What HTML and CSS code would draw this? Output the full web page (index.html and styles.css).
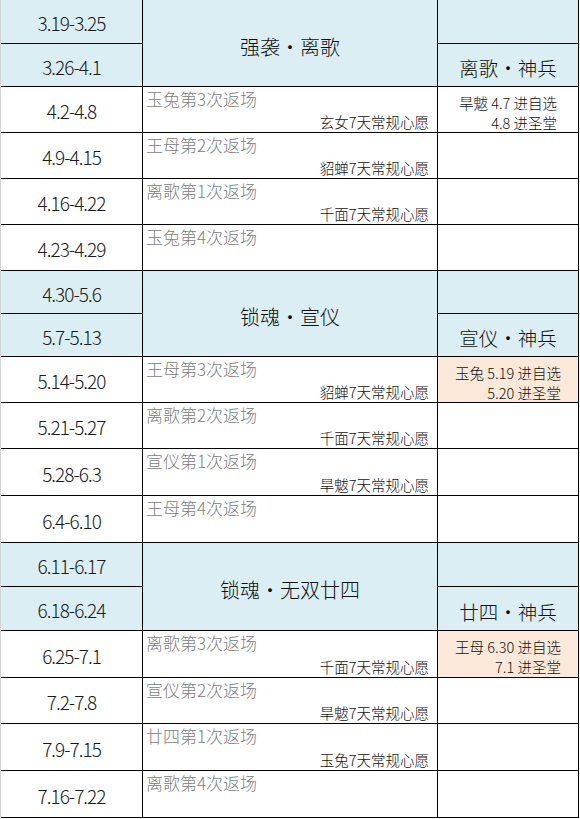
FILE: index.html
```html
<!DOCTYPE html>
<html lang="zh-CN">
<head>
<meta charset="utf-8">
<title>Schedule</title>
<link rel="stylesheet" href="styles.css">
</head>
<body>
<div class="sheet">
  <!-- group 1 -->
  <div class="c date blue r44">3.19-3.25</div>
  <div class="c head blue span2">强袭・离歌</div>
  <div class="c blue r44"></div>
  <div class="c date blue r43">3.26-4.1</div>
  <div class="c sub blue r43">离歌・神兵</div>

  <div class="c date r46">4.2-4.8</div>
  <div class="c mid"><span class="top">玉兔第3次返场</span><span class="bot">玄女7天常规心愿</span></div>
  <div class="c note"><div class="lines"><div>旱魃 4.7 进自选</div><div>4.8 进圣堂</div></div></div>

  <div class="c date r46">4.9-4.15</div>
  <div class="c mid"><span class="top">王母第2次返场</span><span class="bot">貂蝉7天常规心愿</span></div>
  <div class="c"></div>

  <div class="c date r46">4.16-4.22</div>
  <div class="c mid"><span class="top">离歌第1次返场</span><span class="bot">千面7天常规心愿</span></div>
  <div class="c"></div>

  <div class="c date r46">4.23-4.29</div>
  <div class="c mid"><span class="top">玉兔第4次返场</span><span class="bot"></span></div>
  <div class="c"></div>

  <!-- group 2 -->
  <div class="c date blue r43">4.30-5.6</div>
  <div class="c head blue span2">锁魂・宣仪</div>
  <div class="c blue r43"></div>
  <div class="c date blue r43">5.7-5.13</div>
  <div class="c sub blue r43">宣仪・神兵</div>

  <div class="c date r46">5.14-5.20</div>
  <div class="c mid"><span class="top">王母第3次返场</span><span class="bot">貂蝉7天常规心愿</span></div>
  <div class="c note peach"><div class="lines"><div>玉兔 5.19 进自选</div><div>5.20 进圣堂</div></div></div>

  <div class="c date r46">5.21-5.27</div>
  <div class="c mid"><span class="top">离歌第2次返场</span><span class="bot">千面7天常规心愿</span></div>
  <div class="c"></div>

  <div class="c date r47">5.28-6.3</div>
  <div class="c mid"><span class="top">宣仪第1次返场</span><span class="bot">旱魃7天常规心愿</span></div>
  <div class="c"></div>

  <div class="c date r47">6.4-6.10</div>
  <div class="c mid"><span class="top">王母第4次返场</span><span class="bot"></span></div>
  <div class="c"></div>

  <!-- group 3 -->
  <div class="c date blue r44">6.11-6.17</div>
  <div class="c head blue span2">锁魂・无双廿四</div>
  <div class="c blue r44"></div>
  <div class="c date blue r44">6.18-6.24</div>
  <div class="c sub blue r44">廿四・神兵</div>

  <div class="c date r47">6.25-7.1</div>
  <div class="c mid"><span class="top">离歌第3次返场</span><span class="bot">千面7天常规心愿</span></div>
  <div class="c note peach"><div class="lines"><div>王母 6.30 进自选</div><div>7.1 进圣堂</div></div></div>

  <div class="c date r46">7.2-7.8</div>
  <div class="c mid"><span class="top">宣仪第2次返场</span><span class="bot">旱魃7天常规心愿</span></div>
  <div class="c"></div>

  <div class="c date r47">7.9-7.15</div>
  <div class="c mid"><span class="top">廿四第1次返场</span><span class="bot">玉兔7天常规心愿</span></div>
  <div class="c"></div>

  <div class="c date r47">7.16-7.22</div>
  <div class="c mid"><span class="top">离歌第4次返场</span><span class="bot"></span></div>
  <div class="c"></div>
</div>
</body>
</html>
```

FILE: styles.css
```css
html, body {
  margin: 0;
  padding: 0;
  background: #ffffff;
}

.sheet {
  display: grid;
  grid-template-columns: 142px 295px 141px;
  grid-template-rows: 44px 43px 46px 46px 46px 46px 43px 43px 46px 46px 47px 47px 44px 44px 47px 46px 47px 47px;
  width: 579px;
  border-left: 1px solid #d4d4d4;
  box-sizing: border-box;
  font-family: "Noto Sans CJK SC", sans-serif;
  font-weight: 300;
  color: #111111;
}

.c {
  box-sizing: border-box;
  border-right: 1px solid #000000;
  border-bottom: 1px solid #000000;
  background: #ffffff;
  min-width: 0;
  overflow: hidden;
}

.blue {
  background: #daeef3;
}

.peach {
  background: #fde9d9;
}

.date {
  display: flex;
  align-items: center;
  justify-content: center;
  padding-top: 2px;
  font-size: 19px;
  letter-spacing: -1px;
  color: #1a1a1a;
}

.head {
  grid-row: span 2;
  display: flex;
  align-items: center;
  justify-content: center;
  padding-top: 6px;
  font-size: 20px;
  color: #111111;
}

.sub {
  display: flex;
  align-items: center;
  justify-content: center;
  padding-top: 5px;
  font-size: 19.5px;
  color: #111111;
}

.mid {
  display: flex;
  flex-direction: column;
  justify-content: space-between;
  padding: 2px 8px 1px 3px;
}

.mid .top {
  font-size: 17px;
  line-height: 20px;
  color: #808080;
  align-self: flex-start;
}

.mid .bot {
  font-size: 14.5px;
  line-height: 18px;
  color: #111111;
  align-self: flex-end;
}

.note {
  display: flex;
  align-items: center;
  justify-content: center;
  padding-top: 6px;
  font-size: 14.5px;
  line-height: 20px;
  color: #111111;
}

.note .lines {
  text-align: right;
}
```
